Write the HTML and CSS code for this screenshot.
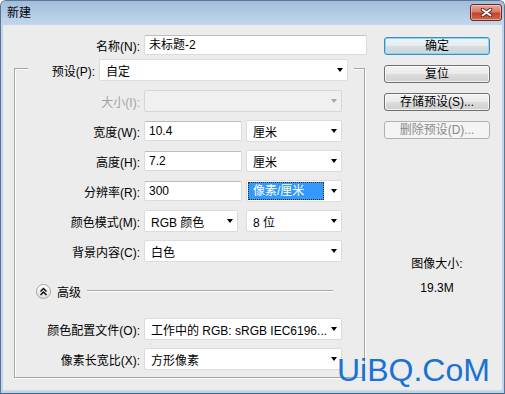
FILE: index.html
```html
<!DOCTYPE html>
<html lang="zh-CN">
<head>
    <meta charset="UTF-8">
    <title>新建</title>
    <link rel="stylesheet" href="styles.css">
</head>
<body>
    <div class="window">
        <div class="titlebar">
            <span class="title">新建</span>
            <button class="close-btn">
                <svg width="13" height="9" viewBox="0 0 13 9">
                    <path d="M2.5 1.5 L10.5 7.5 M10.5 1.5 L2.5 7.5" stroke="#5a2018" stroke-width="3.6" stroke-linecap="round"/>
                    <path d="M2.5 1.5 L10.5 7.5 M10.5 1.5 L2.5 7.5" stroke="#fff" stroke-width="2" stroke-linecap="round"/>
                </svg>
            </button>
        </div>

        <div class="client">
            <div class="main">
                <div class="row name-row">
                    <label class="lbl">名称(N):</label>
                    <div class="input name-input">未标题-2</div>
                </div>

                <div class="group">
                    <div class="group-head">
                        <label class="lbl head-lbl">预设(P):</label>
                        <div class="select preset-select"><span class="val">自定</span><span class="arrow"></span></div>
                    </div>

                    <div class="row size-row">
                        <label class="lbl disabled">大小(I):</label>
                        <div class="select wide off"><span class="val"></span><span class="arrow"></span></div>
                    </div>
                    <div class="row">
                        <label class="lbl">宽度(W):</label>
                        <div class="input num">10.4</div>
                        <div class="select unit"><span class="val">厘米</span><span class="arrow"></span></div>
                    </div>
                    <div class="row">
                        <label class="lbl">高度(H):</label>
                        <div class="input num">7.2</div>
                        <div class="select unit"><span class="val">厘米</span><span class="arrow"></span></div>
                    </div>
                    <div class="row">
                        <label class="lbl">分辨率(R):</label>
                        <div class="input num">300</div>
                        <div class="select unit focus"><span class="val">像素/厘米</span><span class="arrow"></span></div>
                    </div>
                    <div class="row">
                        <label class="lbl">颜色模式(M):</label>
                        <div class="select mode"><span class="val">RGB 颜色</span><span class="arrow"></span></div>
                        <div class="select unit bits"><span class="val">8 位</span><span class="arrow"></span></div>
                    </div>
                    <div class="row">
                        <label class="lbl">背景内容(C):</label>
                        <div class="select wide"><span class="val">白色</span><span class="arrow"></span></div>
                    </div>

                    <div class="adv-row">
                        <span class="adv-btn">
                            <svg width="9" height="9" viewBox="0 0 9 9">
                                <path d="M1.5 4.5 L4.5 1.5 L7.5 4.5 M1.5 8 L4.5 5 L7.5 8" fill="none" stroke="#111" stroke-width="1.5"/>
                            </svg>
                        </span>
                        <span class="adv-text">高级</span>
                        <span class="adv-line"></span>
                    </div>

                    <div class="row profile-row">
                        <label class="lbl">颜色配置文件(O):</label>
                        <div class="select wide"><span class="val">工作中的 RGB: sRGB IEC6196...</span><span class="arrow"></span></div>
                    </div>
                    <div class="row">
                        <label class="lbl">像素长宽比(X):</label>
                        <div class="select wide"><span class="val">方形像素</span><span class="arrow"></span></div>
                    </div>
                </div>
            </div>

            <div class="side">
                <button class="btn default">确定</button>
                <button class="btn">复位</button>
                <button class="btn">存储预设(S)...</button>
                <button class="btn off">删除预设(D)...</button>

                <div class="img-size">
                    <div>图像大小:</div>
                    <div class="img-val">19.3M</div>
                </div>
            </div>
        </div>

        <div class="watermark">UiBQ.CoM<span class="wm-small">PS学习网</span></div>
    </div>
</body>
</html>
```

FILE: styles.css
```css
* {
    box-sizing: border-box;
}

body {
    margin: 0;
    background: #fff;
    font-family: "Liberation Sans", "Noto Sans CJK SC", sans-serif;
    font-size: 12px;
    color: #000;
}

.window {
    width: 505px;
    height: 394px;
    display: flex;
    flex-direction: column;
    border: 1px solid #5b7594;
    border-bottom-color: #2f6f9c;
    border-radius: 6px 6px 0 0;
    background: #c1d5ea;
    position: relative;
    overflow: hidden;
}

.titlebar {
    height: 24px;
    flex: none;
    display: flex;
    justify-content: space-between;
    align-items: flex-start;
    padding: 0 2px 0 6px;
    background: linear-gradient(#a2bcda, #bad0e9 70%, #c2d6ec);
}

.title {
    line-height: 24px;
}

.close-btn {
    margin-top: 3px;
    width: 32px;
    height: 17px;
    padding: 0;
    display: flex;
    align-items: center;
    justify-content: center;
    border: 1px solid #6e2a22;
    border-radius: 3px;
    background: linear-gradient(#e8ab9d, #d67c69 45%, #c4442d 55%, #cf6a4f);
    box-shadow: inset 0 0 0 1px rgba(255, 220, 210, 0.5);
}

.client {
    flex: 1;
    display: flex;
    margin: 0 2px 2px;
    background: #ececec;
    border-bottom: 1px solid #d8d8d8;
}

.main {
    width: 364px;
    padding-top: 10px;
}

.row {
    display: flex;
    align-items: center;
    height: 22px;
    margin-top: 8px;
}

.lbl {
    width: 129px;
    flex: none;
    text-align: right;
    padding-right: 4px;
    white-space: nowrap;
}

.lbl.disabled {
    color: #a3a3a3;
}

.name-row {
    margin-top: 0;
    height: 20px;
}

.name-row .lbl {
    width: 141px;
}

.input {
    height: 20px;
    background: #fff;
    border: 1px solid #dadada;
    border-top-color: #bcbcbc;
    border-radius: 2px;
    padding-left: 4px;
    line-height: 18px;
    white-space: nowrap;
}

.name-input {
    width: 224px;
}

.input.num {
    width: 98px;
    margin-right: 4px;
}

.group {
    margin: 13px 0 0 11px;
    width: 351px;
    border: 1px solid #a6a6a6;
    box-shadow: inset 1px 1px 0 #fff, 1px 1px 0 #fff;
    padding-bottom: 7px;
}

.group-head {
    display: flex;
    align-items: center;
    width: fit-content;
    margin: -10px 0 0 13px;
    padding-right: 6px;
    background: #ececec;
}

.head-lbl {
    width: 71px;
}

.select {
    height: 22px;
    display: flex;
    align-items: center;
    justify-content: space-between;
    background: #fff;
    border: 1px solid #dcdcdc;
    border-radius: 2px;
    padding: 0 4px 0 6px;
    white-space: nowrap;
}

.preset-select {
    width: 249px;
}

.wide {
    width: 198px;
}

.unit {
    width: 96px;
}

.mode {
    width: 94px;
    margin-right: 8px;
}

.select.off {
    background: #f0f0f0;
    border-color: #d6d6d6;
}

.arrow {
    width: 0;
    height: 0;
    border-top: 4px solid #000;
    border-left: 3.5px solid transparent;
    border-right: 3.5px solid transparent;
}

.off .arrow {
    border-top-color: #a8a8a8;
}

.size-row {
    margin-top: 9px;
}

.select.focus {
    padding-left: 1px;
}

.select.focus .val {
    width: 76px;
    height: 18px;
    line-height: 16px;
    padding-left: 4px;
    background: #3399ff;
    color: #fff;
    border: 1px dotted #3a2a10;
}

.adv-row {
    display: flex;
    align-items: center;
    height: 16px;
    margin-top: 21px;
    padding-left: 21px;
}

.adv-btn {
    width: 15px;
    height: 15px;
    display: flex;
    align-items: center;
    justify-content: center;
    border: 1px solid #a3a3a3;
    border-radius: 50%;
    background: linear-gradient(#ffffff, #dedede);
}

.adv-text {
    margin-left: 6px;
}

.adv-line {
    flex: 1;
    height: 2px;
    margin: 0 31px 0 6px;
    border-top: 1px solid #a6a6a6;
    border-bottom: 1px solid #fff;
}

.profile-row {
    margin-top: 19px;
}

.side {
    width: 106px;
    margin-left: 17px;
    padding-top: 12px;
}

.btn {
    display: block;
    width: 106px;
    height: 18px;
    margin-bottom: 10px;
    padding: 0;
    font: inherit;
    color: #000;
    line-height: 16px;
    text-align: center;
    border: 1px solid #707070;
    border-radius: 3px;
    background: linear-gradient(#f2f2f2 0%, #ebebeb 50%, #dddddd 50%, #cfcfcf 100%);
    box-shadow: inset 0 0 0 1px rgba(255, 255, 255, 0.7);
}

.btn.default {
    border-color: #3c8cc4;
    box-shadow: inset 0 0 0 1px #8ad6f7;
    background: linear-gradient(#eef3f6 0%, #e6ecef 50%, #d6dde1 50%, #cdd5da 100%);
}

.btn.off {
    color: #8a8a8a;
    border-color: #adb2b5;
    background: #f4f4f4;
    box-shadow: none;
}

.img-size {
    margin-top: 117px;
    text-align: center;
    line-height: 16px;
}

.img-val {
    margin-top: 8px;
}

.watermark {
    position: absolute;
    left: 336px;
    top: 353px;
    font-family: "Liberation Sans", sans-serif;
    font-size: 32px;
    line-height: 32px;
    color: #1a72d4;
    white-space: nowrap;
}

.wm-small {
    position: absolute;
    left: 34px;
    top: 10px;
    font-size: 12px;
    line-height: 14px;
    color: rgba(120, 120, 120, 0.55);
    z-index: -1;
}
```
